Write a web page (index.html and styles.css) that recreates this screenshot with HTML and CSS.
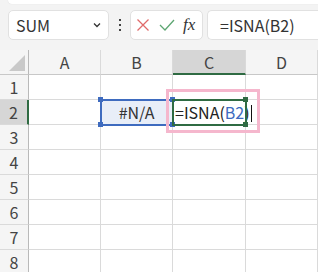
FILE: index.html
```html
<!DOCTYPE html>
<html lang="ja">
  <head>
    <meta charset="UTF-8" />
    <meta name="viewport" content="width=device-width, initial-scale=1.0" />
    <title>ISNA</title>
    <link rel="stylesheet" href="styles.css">
  </head>
  <body>
    <div class="ribbon-edge"></div>
    <div class="formula-bar">
      <div class="name-box">
        <span>SUM</span>
        <svg class="chevron" width="8" height="6" viewBox="0 0 8 6">
          <path d="M1 1.5 L4 4.5 L7 1.5" fill="none" stroke="#333" stroke-width="1.3" />
        </svg>
      </div>
      <div class="dots"><i></i><i></i><i></i></div>
      <div class="fx-box">
        <svg width="14" height="14" viewBox="0 0 14 14">
          <path d="M1.5 1.5 L12.5 12.5 M12.5 1.5 L1.5 12.5" stroke="#e06a6a" stroke-width="1.3" fill="none" />
        </svg>
        <svg width="16" height="14" viewBox="0 0 16 14">
          <path d="M1 7 L6 12 L15 2" stroke="#5da672" stroke-width="1.3" fill="none" />
        </svg>
        <span class="fx">fx</span>
      </div>
      <div class="formula-box">=ISNA(B2)</div>
    </div>

    <div class="sheet">
      <div class="cell corner"><span class="triangle"></span></div>
      <div class="cell col-head">A</div>
      <div class="cell col-head">B</div>
      <div class="cell col-head active">C</div>
      <div class="cell col-head">D</div>

      <div class="cell row-head">1</div>
      <div class="cell"></div><div class="cell"></div><div class="cell"></div><div class="cell"></div>

      <div class="cell row-head active">2</div>
      <div class="cell"></div>
      <div class="cell ref">
        #N/A
        <i class="h tl"></i><i class="h tr"></i><i class="h bl"></i><i class="h br"></i>
      </div>
      <div class="cell editing">
        <span class="edit-box">=ISNA(<span class="ref-text">B2</span>)<span class="caret"></span></span>
        <i class="g tr"></i><i class="g br"></i>
        <span class="mark"></span>
      </div>
      <div class="cell"></div>

      <div class="cell row-head">3</div>
      <div class="cell"></div><div class="cell"></div><div class="cell"></div><div class="cell"></div>
      <div class="cell row-head">4</div>
      <div class="cell"></div><div class="cell"></div><div class="cell"></div><div class="cell"></div>
      <div class="cell row-head">5</div>
      <div class="cell"></div><div class="cell"></div><div class="cell"></div><div class="cell"></div>
      <div class="cell row-head">6</div>
      <div class="cell"></div><div class="cell"></div><div class="cell"></div><div class="cell"></div>
      <div class="cell row-head">7</div>
      <div class="cell"></div><div class="cell"></div><div class="cell"></div><div class="cell"></div>
      <div class="cell row-head">8</div>
      <div class="cell"></div><div class="cell"></div><div class="cell"></div><div class="cell"></div>
    </div>
  </body>
</html>
```

FILE: styles.css
```css
body {
  margin: 0;
  width: 318px;
  height: 272px;
  overflow: hidden;
  background: #f3f3f3;
  font-family: "Noto Sans CJK JP", "Noto Sans", sans-serif;
  color: #333;
}

.ribbon-edge {
  height: 4px;
  margin-left: 8px;
  background: #fff;
  border-bottom-left-radius: 6px;
  box-shadow: 0 0 1px rgba(0, 0, 0, 0.15);
}

.formula-bar {
  display: flex;
  align-items: center;
  height: 46px;
  padding-left: 8px;
  box-sizing: border-box;
  padding-bottom: 4px;
}

.name-box {
  display: flex;
  align-items: center;
  justify-content: space-between;
  width: 101px;
  height: 30px;
  box-sizing: border-box;
  padding: 0 7px 0 7px;
  background: #fff;
  border: 1px solid #e1e1e1;
  border-radius: 5px;
  font-size: 16px;
  color: #333;
}

.dots {
  display: flex;
  flex-direction: column;
  gap: 3px;
  margin: 0 9px 0 10px;
}
.dots i {
  width: 2px;
  height: 2px;
  background: #444;
}

.fx-box {
  display: flex;
  align-items: center;
  width: 73px;
  height: 30px;
  box-sizing: border-box;
  padding-left: 5px;
  gap: 9px;
  background: #fff;
  border: 1px solid #e1e1e1;
  border-radius: 5px;
}
.fx {
  font-family: "Liberation Serif", serif;
  font-style: italic;
  font-size: 17px;
  color: #333;
  margin-left: -1px;
}

.formula-box {
  flex: 1;
  height: 30px;
  margin-left: 4px;
  box-sizing: border-box;
  padding-left: 12px;
  line-height: 28px;
  background: #fff;
  border: 1px solid #e1e1e1;
  border-right: none;
  border-radius: 5px 0 0 5px;
  font-size: 16px;
  color: #333;
}

.sheet {
  display: grid;
  grid-template-columns: 29px 72px 72px 73px 72px;
  grid-template-rows: repeat(9, 25px);
  background: #fff;
}

.cell {
  position: relative;
  border-right: 1px solid #dadada;
  border-bottom: 1px solid #dadada;
  display: flex;
  align-items: center;
  justify-content: center;
  font-size: 16px;
}

.col-head {
  background: #f5f5f5;
  border-bottom-color: #c8c8c8;
  color: #444;
}
.col-head.active {
  background: #d6d6d6;
  border-bottom: 2px solid #2f6b43;
}

.corner {
  background: #f5f5f5;
  border-right-color: #b9b9b9;
  border-bottom-color: #c8c8c8;
}
.triangle {
  position: absolute;
  right: 3px;
  bottom: 3px;
  width: 0;
  height: 0;
  border-left: 16px solid transparent;
  border-bottom: 16px solid #c9c9c9;
}

.row-head {
  background: #f5f5f5;
  border-right-color: #b9b9b9;
  border-bottom-color: #dadada;
  color: #444;
}
.row-head.active {
  background: #d6d6d6;
  border-right: 2px solid #2f6b43;
}

.ref {
  background: #e8eef8;
  outline: 2px solid #3e6bbf;
  outline-offset: -1px;
  color: #333;
  z-index: 1;
}
.ref .h {
  position: absolute;
  width: 5px;
  height: 5px;
  background: #3e6bbf;
}
.h.tl { left: -3px; top: -3px; }
.h.tr { right: -3px; top: -3px; }
.h.bl { left: -3px; bottom: -3px; }
.h.br { right: -3px; bottom: -3px; }

.editing {
  justify-content: flex-start;
  outline: 2px solid #2f6b43;
  outline-offset: -1px;
  z-index: 2;
}
.edit-box {
  flex: none;
  white-space: nowrap;
  padding-left: 2px;
  color: #222;
}
.ref-text {
  color: #3e6bbf;
}
.caret {
  display: inline-block;
  width: 1px;
  height: 17px;
  background: #111;
  vertical-align: -3px;
  margin-left: 1px;
}
.editing .g {
  position: absolute;
  width: 5px;
  height: 5px;
  background: #2f6b43;
}
.g.tr { right: -3px; top: -3px; }
.g.br { right: -3px; bottom: -3px; }

.mark {
  position: absolute;
  left: -7px;
  top: -11px;
  width: 88px;
  height: 38px;
  border: 3px solid #f5b7cd;
  z-index: 3;
}
```
